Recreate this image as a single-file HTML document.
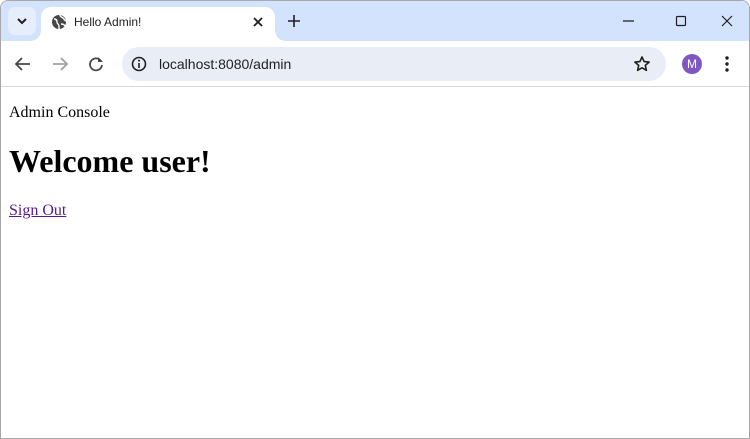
<!DOCTYPE html>
<html><head><style>
*{margin:0;padding:0;box-sizing:border-box}
body{width:750px;height:439px;overflow:hidden;background:#fff;position:relative;font-family:"Liberation Sans",sans-serif}
.frame{position:absolute;inset:0;border:1px solid #a8a8a8;border-radius:8px 8px 0 0;overflow:hidden}
.titlebar{position:absolute;left:0;top:0;width:750px;height:40px;background:#d3e3fd}
.tab{position:absolute;left:40px;top:6px;width:234px;height:36px;background:#fff;border-radius:10px 10px 0 0}
.tab:before,.tab:after{content:"";position:absolute;bottom:2px;width:10px;height:10px}
.tab:before{left:-10px;background:radial-gradient(circle at 0 0,transparent 9.5px,#fff 10px)}
.tab:after{right:-10px;background:radial-gradient(circle at 100% 0,transparent 9.5px,#fff 10px)}
.dd{position:absolute;left:7px;top:6px;width:28px;height:28px;background:#e6eefc;border-radius:7px}
.toolbar{position:absolute;left:0;top:40px;width:750px;height:46px;background:#fff;border-bottom:1px solid #d9d9d9}
.omni{position:absolute;left:121px;top:6px;width:544px;height:34px;background:#e9eef6;border-radius:17px}
.t{position:absolute;font-size:13px;color:#1f1f1f}
.serif{position:absolute;font-family:"Liberation Serif",serif;color:#000;left:8px}
</style></head><body>
<div class="frame">
<div class="titlebar"></div>
<div class="dd"><svg width="28" height="28"><path d="M10 12l4 4 4-4" stroke="#1f1f1f" stroke-width="2" fill="none"/></svg></div>
<div class="tab">
<svg style="position:absolute;left:10px;top:7px" width="16" height="16"><circle cx="8" cy="8" r="7" fill="#474747"/><path d="M3 5c2 0 3 1 3 3s2 2 2 4v3M9 1c0 2 2 2 3 3s2 3 3 3M10 10c1 0 3 0 4 2" stroke="#fff" stroke-width="1.4" fill="none"/></svg>
<div class="t" style="left:33px;top:8px;font-size:12px">Hello Admin!</div>
<svg style="position:absolute;left:210px;top:8px" width="14" height="14"><path d="M3 3l8 8M11 3l-8 8" stroke="#1f1f1f" stroke-width="1.8"/></svg>
</div>
<svg style="position:absolute;left:285px;top:12px" width="16" height="16"><path d="M8 2v12M2 8h12" stroke="#1f1f1f" stroke-width="1.6"/></svg>
<svg style="position:absolute;left:620px;top:12px" width="120" height="16"><path d="M2 8h11" stroke="#1f1f1f" stroke-width="1.2"/><rect x="55.5" y="3.5" width="9" height="9" rx="1" stroke="#1f1f1f" stroke-width="1.2" fill="none"/><path d="M101 3l10 10M111 3l-10 10" stroke="#1f1f1f" stroke-width="1.2"/></svg>
<div class="toolbar">
<svg style="position:absolute;left:12px;top:14px" width="100" height="18"><path d="M17 9H4M9 3L3 9l6 6" stroke="#474747" stroke-width="1.8" fill="none"/><path d="M40 9h13M48 3l6 6-6 6" stroke="#a0a0a0" stroke-width="1.8" fill="none"/><path d="M88 6a6 6 0 1 0 1 4" stroke="#474747" stroke-width="1.8" fill="none"/><path d="M85 2v5h5z" fill="#474747"/></svg>
<div class="omni">
<svg style="position:absolute;left:9px;top:9px" width="16" height="16"><circle cx="8" cy="8" r="6.5" stroke="#1f1f1f" stroke-width="1.6" fill="none"/><path d="M8 7v5" stroke="#1f1f1f" stroke-width="1.6"/><circle cx="8" cy="4.6" r="1" fill="#1f1f1f"/></svg>
<div class="t" style="left:37px;top:9px;font-size:14px">localhost:8080/admin</div>
<svg style="position:absolute;left:511px;top:8px" width="18" height="18"><path d="M9 2l2.1 4.6 5 .5-3.8 3.3 1.1 4.9L9 12.8l-4.4 2.5 1.1-4.9L1.9 7.1l5-.5z" stroke="#1f1f1f" stroke-width="1.6" fill="none" stroke-linejoin="round"/></svg>
</div>
<div style="position:absolute;left:681px;top:13px;width:20px;height:20px;border-radius:50%;background:#7e57c2;color:#fff;font-size:12px;text-align:center;line-height:20px">M</div>
<svg style="position:absolute;left:722px;top:14px" width="8" height="18"><circle cx="4" cy="3" r="1.7" fill="#1f1f1f"/><circle cx="4" cy="9" r="1.7" fill="#1f1f1f"/><circle cx="4" cy="15" r="1.7" fill="#1f1f1f"/></svg>
</div>
<div class="serif" style="top:103px;font-size:16px;line-height:18px">Admin Console</div>
<div class="serif" style="top:142px;font-size:32px;line-height:37px;font-weight:bold">Welcome user!</div>
<div class="serif" style="top:201px;font-size:16px;line-height:18px;color:#551a8b;text-decoration:underline">Sign Out</div>
</div>
</body></html>
